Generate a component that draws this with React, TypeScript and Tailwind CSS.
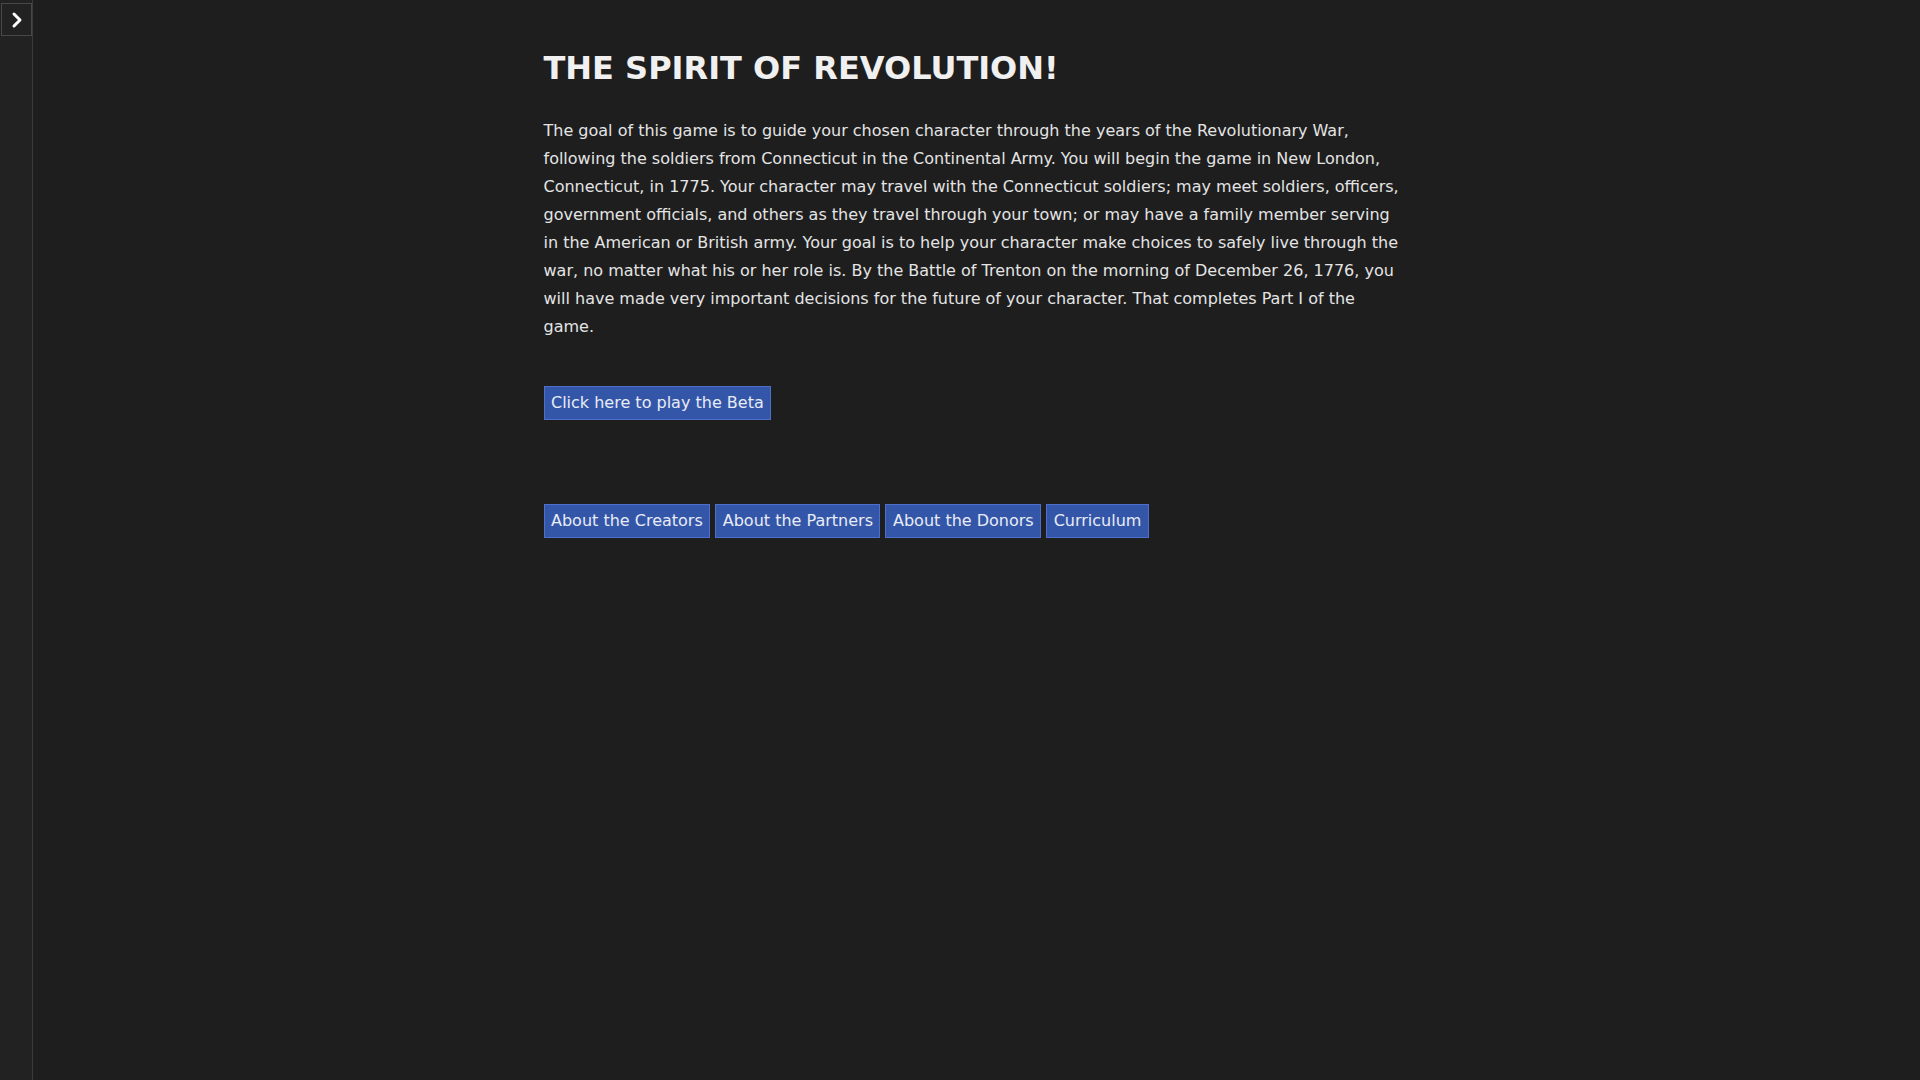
import { ChevronRight } from 'lucide-react';

const links = ['About the Creators', 'About the Partners', 'About the Donors', 'Curriculum'];

function BlueButton({ label }: { label: string }) {
  return (
    <button className="inline-block border border-[#4d70cc] bg-[#3456a9] px-[6.5px] py-[6px] text-[16px] leading-5 text-[#e8ecf5] hover:bg-[#3d62bd]">
      {label}
    </button>
  );
}

export default function App() {
  return (
    <div
      className="flex min-h-screen bg-[#1e1e1e] text-[#ececec]"
      style={{ fontFamily: '"DejaVu Sans", Verdana, sans-serif' }}
    >
      <aside className="w-[33px] shrink-0 border-r border-[#3a3a3a] bg-[#222222] pl-[1px] pt-[3px]">
        <button className="flex h-[33px] w-[31px] items-center justify-center border border-[#484848] text-white">
          <ChevronRight size={24} strokeWidth={3} />
        </button>
      </aside>
      <main className="flex-1">
        <div className="mx-auto w-[866px] pr-[6px] pt-[49px]">
          <h1 className="mb-[30px] text-[32px] font-bold leading-[1.2] text-[#f0f0f0]">
            THE SPIRIT OF REVOLUTION!
          </h1>
          <p className="text-[16px] leading-[28px] text-[#e4e4e4]">
            The goal of this game is to guide your chosen character through the years of the Revolutionary War,
            following the soldiers from Connecticut in the Continental Army. You will begin the game in New London,
            Connecticut, in 1775. Your character may travel with the Connecticut soldiers; may meet soldiers, officers,
            government officials, and others as they travel through your town; or may have a family member serving
            in the American or British army. Your goal is to help your character make choices to safely live through the
            war, no matter what his or her role is. By the Battle of Trenton on the morning of December 26, 1776, you
            will have made very important decisions for the future of your character. That completes Part I of the
            game.
          </p>
          <div className="mt-[45px]">
            <BlueButton label="Click here to play the Beta" />
          </div>
          <div className="mt-[84px] flex gap-[5px]">
            {links.map((l) => (
              <BlueButton key={l} label={l} />
            ))}
          </div>
        </div>
      </main>
    </div>
  );
}
